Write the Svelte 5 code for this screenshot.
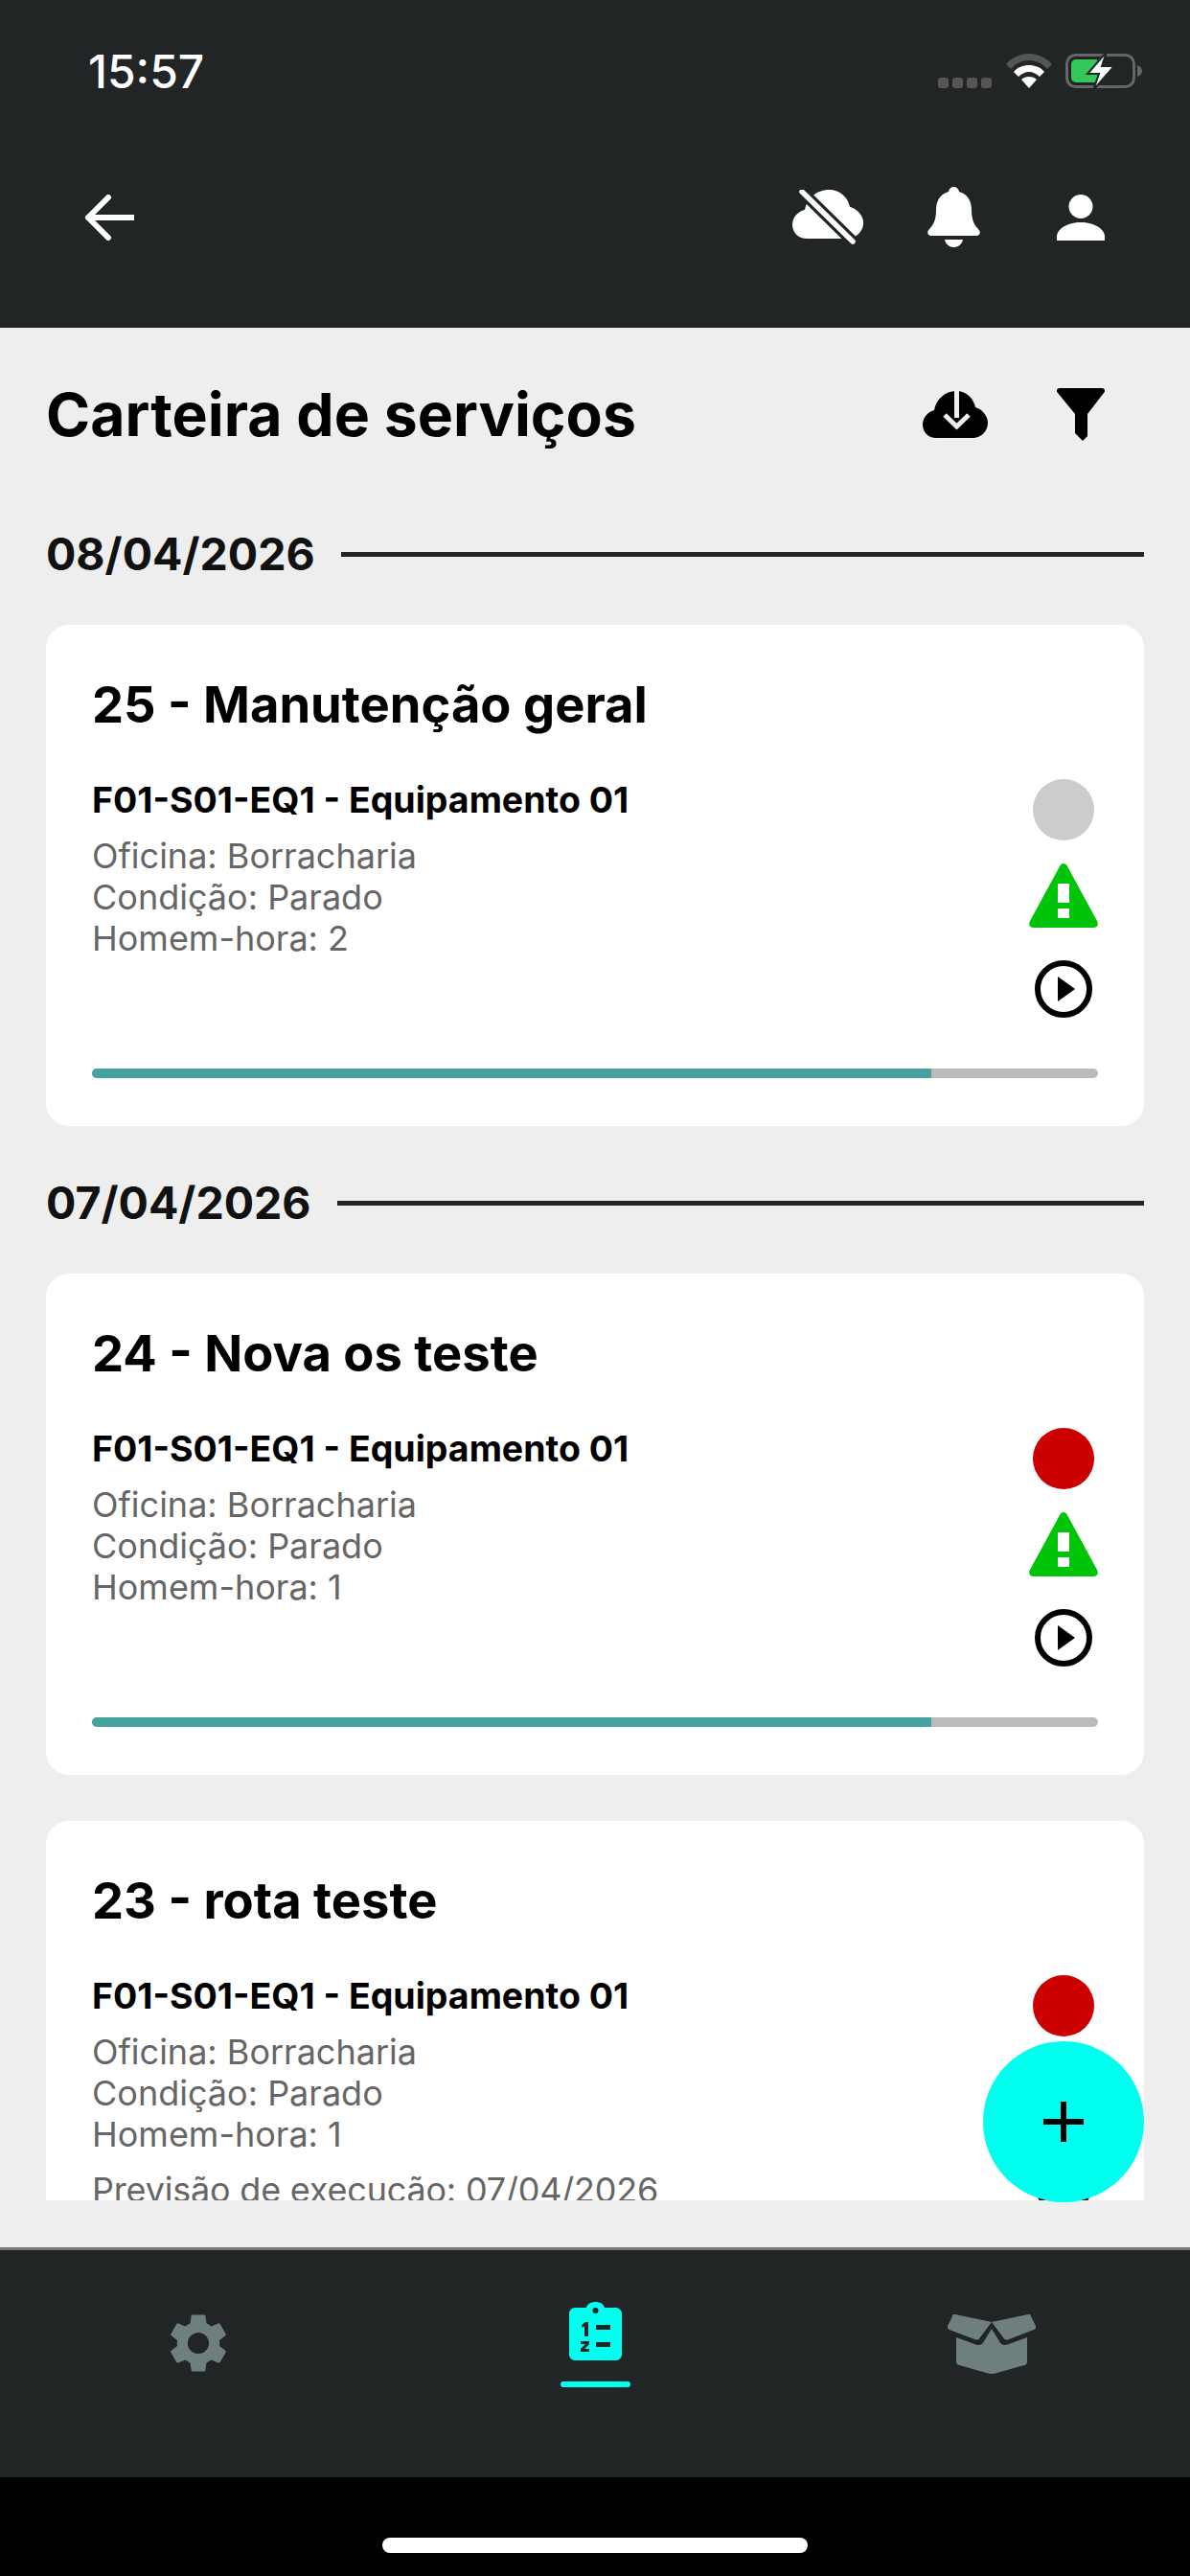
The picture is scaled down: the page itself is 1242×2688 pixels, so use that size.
<script>
  const groups = [
    {
      date: "08/04/2026",
      orders: [
        { title: "25 - Manutenção geral", status: "#cccccc", hours: 2, forecast: null }
      ]
    },
    {
      date: "07/04/2026",
      orders: [
        { title: "24 - Nova os teste", status: "#cc0000", hours: 1, forecast: null },
        { title: "23 - rota teste", status: "#cc0000", hours: 1, forecast: "07/04/2026" }
      ]
    }
  ];

  const cloud = "M14 49C6 49 0 43 0 35C0 28 5 22 12 20C14 9 23 0 35 0C45 0 53 7 55 17C62 19 68 26 68 33C68 42 61 49 52 49Z";
</script>

<div class="phone">
  <header class="top">
    <div class="status">
      <span class="time">15:57</span>
      <div class="status-icons">
        <div class="signal"><i></i><i></i><i></i><i></i></div>
        <svg class="wifi" viewBox="0 0 48 36" width="48" height="36">
          <path d="M0 11C6 4 15 0 24 0s18 4 24 11l-5 5C38 10 31 7 24 7S10 10 5 16Z" fill="#555" />
          <path d="M8 19C12 14 18 12 24 12s12 2 16 7l-5 5c-3-3-7-5-11-5s-8 2-11 5Z" fill="#fff" />
          <path d="M16 27c2-2 5-3 8-3s6 1 8 3l-8 9Z" fill="#fff" />
        </svg>
        <svg class="battery" viewBox="0 0 82 40" width="82" height="40">
          <rect x="1.5" y="3.5" width="70" height="33" rx="9" fill="none" stroke="#666" stroke-width="3" />
          <rect x="6" y="8" width="30" height="24" rx="5" fill="#34c759" />
          <path d="M75 14c3 1 5 3 5 6s-2 5-5 6Z" fill="#666" />
          <path d="M43 0L23 23h12l-6 17 22-25H38Z" fill="#fff" stroke="#212526" stroke-width="2" />
        </svg>
      </div>
    </div>
    <div class="toolbar">
      <svg viewBox="0 0 52 48" width="52" height="48">
        <path d="M25 3L4 24l21 21M4 24h48" fill="none" stroke="#fff" stroke-width="6" stroke-linecap="round" stroke-linejoin="round" />
      </svg>
      <div class="toolbar-actions">
        <svg viewBox="0 0 74 57" width="74" height="57">
          <g transform="scale(1.09 1.04)"><path d={cloud} fill="#fff" /></g>
          <path d="M6 -2L67 58" stroke="#212526" stroke-width="12" />
          <path d="M10 2L63 54" stroke="#fff" stroke-width="5.500" stroke-linecap="round" />
        </svg>
        <svg viewBox="0 0 55 63" width="55" height="63">
          <path d="M27.5 0c3 0 5 2 5.500 5C42 7.500 46 15 46 24c0 9 2 15 7 20 3 3 2 7-2 7H4c-4 0-5-4-2-7 5-5 7-11 7-20C9 15 13 7.500 22 5 22.500 2 24.500 0 27.500 0Z" fill="#fff" />
          <path d="M18 55h19c-1 5-5 8-9.500 8S19 60 18 55Z" fill="#fff" />
        </svg>
        <svg class="person" viewBox="0 0 50 48" width="50" height="48">
          <circle cx="25" cy="12.500" r="12.500" fill="#fff" />
          <path d="M0 48V44C0 36 11 29 25 29s25 7 25 15v4Z" fill="#fff" />
        </svg>
      </div>
    </div>
  </header>

  <main class="content">
    <div class="title-row">
      <h1>Carteira de serviços</h1>
      <div class="title-actions">
        <svg viewBox="0 0 68 49" width="68" height="49">
          <path d={cloud} fill="#000" />
          <path d="M33 -2h5v30h-5Z" fill="#eee" />
          <path d="M23 25l12.500 12L48 25" fill="none" stroke="#eee" stroke-width="5" />
        </svg>
        <svg viewBox="0 0 50 55" width="50" height="55">
          <path d="M3 0H47c3 0 4 3 2 5L32 27V50l-5 5-8-8V27L1 5C-1 3 0 0 3 0Z" fill="#000" />
        </svg>
      </div>
    </div>

    {#each groups as group}
      <div class="date-row">
        <span>{group.date}</span>
        <div class="rule"></div>
      </div>
      {#each group.orders as order}
        <article class="card">
          <h2>{order.title}</h2>
          <div class="card-body">
            <div class="details">
              <h3>F01-S01-EQ1 - Equipamento 01</h3>
              <p>Oficina: Borracharia</p>
              <p>Condição: Parado</p>
              <p>Homem-hora: {order.hours}</p>
              {#if order.forecast}
                <p class="forecast">Previsão de execução: {order.forecast}</p>
              {/if}
            </div>
            <div class="indicators">
              <div class="dot" style:background={order.status}></div>
              <svg class="warn" viewBox="0 0 72 67" width="72" height="67">
                <path d="M32 3c2-4 6-4 8 0l31 57c2 4 0 7-4 7H5c-4 0-6-3-4-7Z" fill="#00c40a" />
                <rect x="30" y="21" width="12" height="20" fill="#fff" />
                <rect x="30" y="47" width="12" height="10" fill="#fff" />
              </svg>
              <svg class="play" viewBox="0 0 60 60" width="60" height="60">
                <circle cx="30" cy="30" r="27" fill="none" stroke="#000" stroke-width="6" />
                <path d="M24 17l18 13-18 13Z" fill="#000" />
              </svg>
            </div>
          </div>
          <div class="progress"><div class="progress-fill"></div></div>
        </article>
      {/each}
    {/each}
  </main>

  <button class="fab" aria-label="Adicionar">
    <svg viewBox="0 0 42 42" width="42" height="42">
      <path d="M18 0h6v18h18v6H24v18h-6V24H0v-6h18Z" fill="#000" />
    </svg>
  </button>

  <nav class="tabs">
    <div class="tab gear">
      <svg viewBox="0 0 24 24" width="74" height="74">
        <path d="M19.140 12.940c.04-.3.06-.61.06-.94 0-.32-.02-.64-.07-.94l2.030-1.580c.18-.14.23-.41.120-.61l-1.920-3.320c-.12-.22-.37-.29-.59-.22l-2.390.96c-.5-.38-1.030-.7-1.620-.94l-.36-2.540c-.04-.24-.24-.41-.48-.41h-3.840c-.24 0-.43.17-.47.41l-.36 2.540c-.59.24-1.130.57-1.620.94l-2.390-.96c-.22-.08-.47 0-.59.22L2.740 8.870c-.12.21-.08.47.12.61l2.030 1.580c-.05.3-.09.63-.09.94s.02.64.07.94l-2.030 1.580c-.18.14-.23.41-.12.61l1.920 3.320c.12.22.37.29.59.22l2.390-.96c.5.38 1.030.7 1.620.94l.36 2.540c.05.24.24.41.48.41h3.840c.24 0 .44-.17.47-.41l.36-2.540c.59-.24 1.130-.56 1.620-.94l2.390.96c.22.08.47 0 .59-.22l1.920-3.320c.12-.22.07-.47-.12-.61l-2.010-1.580zM12 15.600c-1.980 0-3.600-1.620-3.600-3.600s1.620-3.600 3.600-3.600 3.600 1.620 3.600 3.600-1.620 3.600-3.600 3.600z" fill="#6f7f7e" />
      </svg>
    </div>
    <div class="tab active">
      <svg viewBox="0 0 55 61" width="55" height="61">
        <path d="M6 6H18C19 2 23 0 27.500 0S36 2 37 6H49c3 0 6 3 6 6V55c0 3-3 6-6 6H6c-3 0-6-3-6-6V12C0 9 3 6 6 6Z" fill="#00ffee" />
        <circle cx="27.500" cy="9" r="3" fill="#212526" />
        <path d="M13 24l4-3h3V36H16V25.500l-3 1.500Z" fill="#212526" />
        <rect x="28" y="24" width="15" height="5" fill="#212526" />
        <path d="M12 41h9v3l-5 5h5v3H12v-3l5-5h-5Z" fill="#212526" />
        <rect x="28" y="42" width="15" height="5" fill="#212526" />
      </svg>
      <div class="tab-mark"></div>
    </div>
    <div class="tab">
      <svg viewBox="0 0 92 64" width="92" height="64">
        <path d="M46 10L8 2c-2 0-3 0-3 2L0 14c-1 2 0 3 2 4l26 10c3 1 4 1 6-2Z" fill="#6f7f7e" />
        <path d="M46 10L84 2c2 0 3 0 3 2l5 10c1 2 0 3-2 4L64 28c-3 1-4 1-6-2Z" fill="#6f7f7e" />
        <path d="M9 26l19 7c5 2 8 1 10-3l8-13 8 13c2 4 5 5 10 3l19-7V51c0 2-1 4-3 4L48 64c-1 0-3 0-4 0L12 55c-2 0-3-2-3-4Z" fill="#6f7f7e" />
      </svg>
    </div>
  </nav>

  <div class="home-area"><div class="home-bar"></div></div>
</div>

<style>
  :global(body) {
    background: #000;
  }

  .phone {
    position: relative;
    display: flex;
    flex-direction: column;
    height: 2688px;
    overflow: hidden;
    background: #eeeeee;
    font-family: Inter, "Liberation Sans", sans-serif;
  }

  .top {
    height: 342px;
    flex: none;
    box-sizing: border-box;
    background: #212526;
    color: #fff;
  }

  .status {
    display: flex;
    align-items: center;
    justify-content: space-between;
    height: 36px;
    padding: 56px 48px 0 92px;
  }

  .time {
    font-size: 48px;
    font-weight: 500;
  }

  .status-icons {
    display: flex;
    align-items: center;
  }

  .signal {
    display: flex;
    gap: 4px;
    align-self: flex-end;
    margin: 0 15px 2px 0;
  }

  .signal i {
    width: 11px;
    height: 11px;
    border-radius: 3px;
    background: #555;
  }

  .wifi {
    margin-right: 14px;
  }

  .toolbar {
    display: flex;
    align-items: center;
    justify-content: space-between;
    padding: 103px 89px 0 88px;
  }

  .toolbar-actions {
    display: flex;
    align-items: center;
    gap: 67px;
  }

  .toolbar-actions .person {
    margin-left: 13px;
  }

  .content {
    flex: 1;
    min-height: 0;
    overflow: hidden;
    margin-bottom: 49px;
    padding: 0 48px;
  }

  .title-row {
    display: flex;
    align-items: center;
    justify-content: space-between;
    height: 180px;
  }

  h1 {
    margin: 0;
    font-size: 62.500px;
    font-weight: 700;
    color: #000;
  }

  .title-actions {
    display: flex;
    align-items: center;
    gap: 72px;
    margin-right: 41px;
  }

  .date-row {
    display: flex;
    align-items: center;
    gap: 27px;
    height: 54px;
    margin: 29px 0 47px;
    font-size: 46.500px;
    font-weight: 700;
    color: #111;
  }

  .rule {
    flex: 1;
    height: 5px;
    background: #212526;
  }

  .card {
    box-sizing: border-box;
    height: 523px;
    margin-bottom: 48px;
    padding: 53px 48px 0;
    border-radius: 24px;
    background: #fff;
  }

  .date-row + .card + .date-row {
    margin-top: 0;
  }

  .card:has(+ .date-row) {
    margin-bottom: 53px;
  }

  h2 {
    margin: 0;
    height: 60px;
    font-size: 52.500px;
    line-height: 60px;
    font-weight: 700;
    color: #000;
  }

  .card-body {
    display: flex;
    justify-content: space-between;
    height: 275px;
    margin-top: 47px;
  }

  h3 {
    margin: 1px 0 15px;
    font-size: 37.500px;
    line-height: 44px;
    font-weight: 700;
    color: #000;
  }

  p {
    margin: 0;
    font-size: 36px;
    line-height: 43px;
    color: #666;
  }

  .forecast {
    margin-top: 15px;
    letter-spacing: -0.2px;
  }

  .indicators {
    display: flex;
    flex-direction: column;
    align-items: center;
    margin-top: 1px;
  }

  .dot {
    width: 64px;
    height: 64px;
    border-radius: 50%;
  }

  .warn {
    margin-top: 24px;
  }

  .play {
    margin-top: 34px;
  }

  .progress {
    height: 10px;
    margin-top: 28px;
    overflow: hidden;
    border-radius: 5px;
    background: #bbbbbb;
  }

  .progress-fill {
    width: 83.400%;
    height: 100%;
    background: #46a29c;
  }

  .fab {
    position: absolute;
    left: 1026px;
    top: 2130px;
    display: flex;
    align-items: center;
    justify-content: center;
    width: 168px;
    height: 168px;
    padding: 0;
    border: none;
    border-radius: 50%;
    background: #00ffee;
  }

  .tabs {
    display: grid;
    grid-template-columns: repeat(3, 1fr);
    flex: none;
    height: 240px;
    box-sizing: border-box;
    border-top: 3px solid #777;
    background: #212526;
  }

  .tab {
    display: flex;
    flex-direction: column;
    align-items: center;
    padding-top: 65px;
  }

  .tab.gear {
    padding-top: 60px;
  }

  .tab.active {
    padding-top: 54px;
  }

  .tab-mark {
    width: 73px;
    height: 6px;
    margin-top: 22px;
    border-radius: 3px;
    background: #00ffee;
  }

  .home-area {
    display: flex;
    justify-content: center;
    flex: none;
    height: 103px;
    background: #000;
  }

  .home-bar {
    width: 444px;
    height: 16px;
    margin-top: 63px;
    border-radius: 8px;
    background: #fff;
  }
</style>
